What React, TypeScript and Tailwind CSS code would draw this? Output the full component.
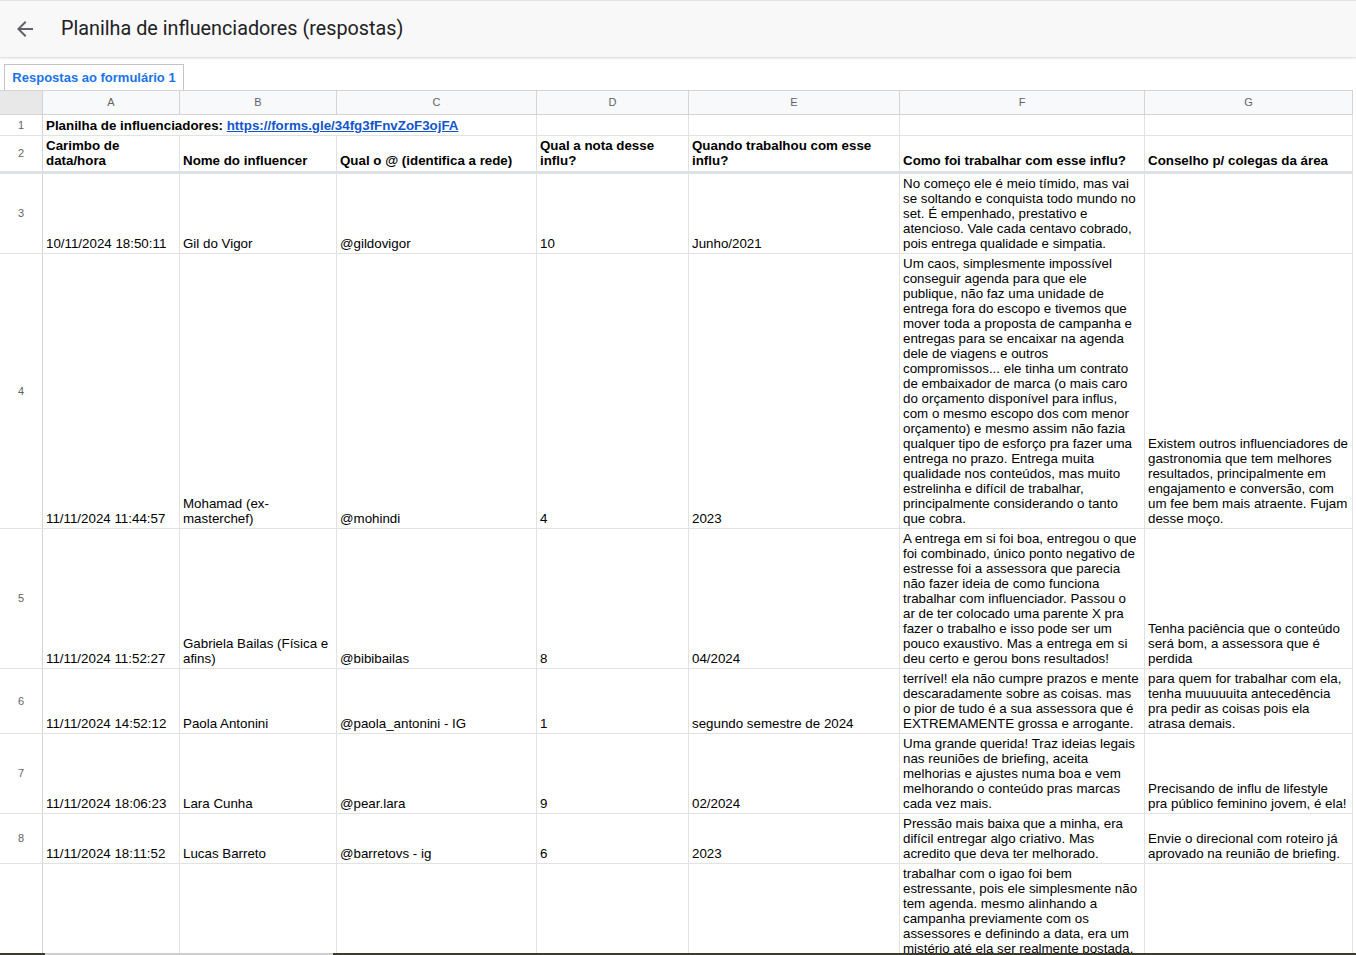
import React from "react";

type RowData = {
  num: string;
  h: string;
  cells: string[][];
  top?: boolean;
};

const colW = ["w-[137px]", "w-[157px]", "w-[200px]", "w-[152px]", "w-[211px]", "w-[245px]", "w-[208px]"];
const letters = ["A", "B", "C", "D", "E", "F", "G"];

const rows: RowData[] = [
  {
    num: "3",
    h: "h-[80px]",
    cells: [
      ["10/11/2024 18:50:11"],
      ["Gil do Vigor"],
      ["@gildovigor"],
      ["10"],
      ["Junho/2021"],
      [
        "No começo ele é meio tímido, mas vai",
        "se soltando e conquista todo mundo no",
        "set. É empenhado, prestativo e",
        "atencioso. Vale cada centavo cobrado,",
        "pois entrega qualidade e simpatia.",
      ],
      [],
    ],
  },
  {
    num: "4",
    h: "h-[275px]",
    cells: [
      ["11/11/2024 11:44:57"],
      ["Mohamad (ex-", "masterchef)"],
      ["@mohindi"],
      ["4"],
      ["2023"],
      [
        "Um caos, simplesmente impossível",
        "conseguir agenda para que ele",
        "publique, não faz uma unidade de",
        "entrega fora do escopo e tivemos que",
        "mover toda a proposta de campanha e",
        "entregas para se encaixar na agenda",
        "dele de viagens e outros",
        "compromissos... ele tinha um contrato",
        "de embaixador de marca (o mais caro",
        "do orçamento disponível para influs,",
        "com o mesmo escopo dos com menor",
        "orçamento) e mesmo assim não fazia",
        "qualquer tipo de esforço pra fazer uma",
        "entrega no prazo. Entrega muita",
        "qualidade nos conteúdos, mas muito",
        "estrelinha e difícil de trabalhar,",
        "principalmente considerando o tanto",
        "que cobra.",
      ],
      [
        "Existem outros influenciadores de",
        "gastronomia que tem melhores",
        "resultados, principalmente em",
        "engajamento e conversão, com",
        "um fee bem mais atraente. Fujam",
        "desse moço.",
      ],
    ],
  },
  {
    num: "5",
    h: "h-[140px]",
    cells: [
      ["11/11/2024 11:52:27"],
      ["Gabriela Bailas (Física e", "afins)"],
      ["@bibibailas"],
      ["8"],
      ["04/2024"],
      [
        "A entrega em si foi boa, entregou o que",
        "foi combinado, único ponto negativo de",
        "estresse foi a assessora que parecia",
        "não fazer ideia de como funciona",
        "trabalhar com influenciador. Passou o",
        "ar de ter colocado uma parente X pra",
        "fazer o trabalho e isso pode ser um",
        "pouco exaustivo. Mas a entrega em si",
        "deu certo e gerou bons resultados!",
      ],
      ["Tenha paciência que o conteúdo", "será bom, a assessora que é", "perdida"],
    ],
  },
  {
    num: "6",
    h: "h-[65px]",
    cells: [
      ["11/11/2024 14:52:12"],
      ["Paola Antonini"],
      ["@paola_antonini - IG"],
      ["1"],
      ["segundo semestre de 2024"],
      [
        "terrível! ela não cumpre prazos e mente",
        "descaradamente sobre as coisas. mas",
        "o pior de tudo é a sua assessora que é",
        "EXTREMAMENTE grossa e arrogante.",
      ],
      [
        "para quem for trabalhar com ela,",
        "tenha muuuuuita antecedência",
        "pra pedir as coisas pois ela",
        "atrasa demais.",
      ],
    ],
  },
  {
    num: "7",
    h: "h-[80px]",
    cells: [
      ["11/11/2024 18:06:23"],
      ["Lara Cunha"],
      ["@pear.lara"],
      ["9"],
      ["02/2024"],
      [
        "Uma grande querida! Traz ideias legais",
        "nas reuniões de briefing, aceita",
        "melhorias e ajustes numa boa e vem",
        "melhorando o conteúdo pras marcas",
        "cada vez mais.",
      ],
      ["Precisando de influ de lifestyle", "pra público feminino jovem, é ela!"],
    ],
  },
  {
    num: "8",
    h: "h-[50px]",
    cells: [
      ["11/11/2024 18:11:52"],
      ["Lucas Barreto"],
      ["@barretovs - ig"],
      ["6"],
      ["2023"],
      [
        "Pressão mais baixa que a minha, era",
        "difícil entregar algo criativo. Mas",
        "acredito que deva ter melhorado.",
      ],
      ["Envie o direcional com roteiro já", "aprovado na reunião de briefing."],
    ],
  },
  {
    num: "9",
    h: "h-[320px]",
    top: true,
    cells: [
      [],
      [],
      [],
      [],
      [],
      [
        "trabalhar com o igao foi bem",
        "estressante, pois ele simplesmente não",
        "tem agenda. mesmo alinhando a",
        "campanha previamente com os",
        "assessores e definindo a data, era um",
        "mistério até ela ser realmente postada.",
      ],
      [],
    ],
  },
];

function RowNum({ n }: { n: string }) {
  return (
    <div className="w-[43px] shrink-0 border-r border-[#d4d4d4] flex items-center justify-center text-[11px] text-[#5f6368]">
      {n}
    </div>
  );
}

function Cell({
  w,
  lines,
  top,
  bold,
  pb,
}: {
  w: string;
  lines: string[];
  top?: boolean;
  bold?: boolean;
  pb?: string;
}) {
  return (
    <div
      className={`${w} shrink-0 border-r border-[#e2e2e2] flex flex-col ${top ? "justify-start pt-[2px]" : `justify-end ${pb ?? "pb-[2px]"}`} px-[3px] overflow-hidden ${bold ? "font-bold" : ""}`}
    >
      {lines.map((l, i) => (
        <div key={i} className="whitespace-nowrap leading-[15px]">
          {l}
        </div>
      ))}
    </div>
  );
}

export default function App() {
  return (
    <div className="w-[1356px] h-[955px] overflow-hidden bg-white flex flex-col font-['Liberation_Sans',Arial,sans-serif] text-[13.33px] text-black">
      {/* Title bar */}
      <div className="h-[58px] shrink-0 bg-[#f8f8f8] border-t border-[#e4e4e4] border-b border-[#d6d6d6] flex items-center shadow-[0_1px_2px_rgba(0,0,0,0.08)]">
        <svg className="ml-[13px] w-6 h-6" viewBox="0 0 24 24" fill="#5f6368">
          <path d="M20 11H7.83l5.59-5.59L12 4l-8 8 8 8 1.41-1.41L7.83 13H20v-2z" />
        </svg>
        <span className="ml-[24px] font-['Roboto',sans-serif] text-[19.8px] text-[#202124]">
          Planilha de influenciadores (respostas)
        </span>
      </div>

      {/* Tabs */}
      <div className="h-[32px] shrink-0 flex items-end pl-[4px]">
        <div className="h-[26px] w-[180px] border border-b-0 border-[#c4c4c4] bg-white flex items-center justify-center text-[13px] font-bold text-[#1a73e8]">
          Respostas ao formulário 1
        </div>
      </div>

      {/* Grid */}
      <div className="flex-1 overflow-hidden">
        <div className="w-[1353px] border-t border-[#d4d4d4]">
          {/* Column headers */}
          <div className="flex h-[24px] border-b border-[#d4d4d4] bg-[#f8f9fa]">
            <div className="w-[43px] shrink-0 border-r border-[#d4d4d4] bg-[#e8e8e8]" />
            {letters.map((l, i) => (
              <div
                key={l}
                className={`${colW[i]} shrink-0 border-r border-[#d4d4d4] flex items-center justify-center text-[11px] text-[#5f6368]`}
              >
                {l}
              </div>
            ))}
          </div>

          {/* Row 1 */}
          <div className="flex h-[21px] border-b border-[#e2e2e2]">
            <RowNum n="1" />
            <div className="w-[494px] shrink-0 border-r border-[#e2e2e2] flex flex-col justify-end pb-[2px] px-[3px] font-bold whitespace-nowrap leading-[15px]">
              <div>
                Planilha de influenciadores:{" "}
                <a href="#" className="text-[#1155cc] underline">
                  https://forms.gle/34fg3fFnvZoF3ojFA
                </a>
              </div>
            </div>
            <Cell w={colW[3]} lines={[]} />
            <Cell w={colW[4]} lines={[]} />
            <Cell w={colW[5]} lines={[]} />
            <Cell w={colW[6]} lines={[]} />
          </div>

          {/* Row 2 (frozen) */}
          <div className="flex h-[38px] border-b-[3px] border-[#dde0e4]">
            <RowNum n="2" />
            <Cell w={colW[0]} bold pb="pb-[3px]" lines={["Carimbo de", "data/hora"]} />
            <Cell w={colW[1]} bold pb="pb-[3px]" lines={["Nome do influencer"]} />
            <Cell w={colW[2]} bold pb="pb-[3px]" lines={["Qual o @ (identifica a rede)"]} />
            <Cell w={colW[3]} bold pb="pb-[3px]" lines={["Qual a nota desse", "influ?"]} />
            <Cell w={colW[4]} bold pb="pb-[3px]" lines={["Quando trabalhou com esse", "influ?"]} />
            <Cell w={colW[5]} bold pb="pb-[3px]" lines={["Como foi trabalhar com esse influ?"]} />
            <Cell w={colW[6]} bold pb="pb-[3px]" lines={["Conselho p/ colegas da área"]} />
          </div>

          {rows.map((r) => (
            <div key={r.num} className={`flex ${r.h} border-b border-[#e2e2e2]`}>
              <RowNum n={r.num} />
              {r.cells.map((c, i) => (
                <Cell key={i} w={colW[i]} lines={c} top={r.top} />
              ))}
            </div>
          ))}
        </div>
      </div>

      {/* bottom edge */}
      <div className="h-[2px] shrink-0 flex">
        <div className="w-[45px] bg-[#3c3c2e]" />
        <div className="w-[288px] bg-[#cfcfcf]" />
        <div className="flex-1 bg-[#3c3c2e]" />
      </div>
    </div>
  );
}
